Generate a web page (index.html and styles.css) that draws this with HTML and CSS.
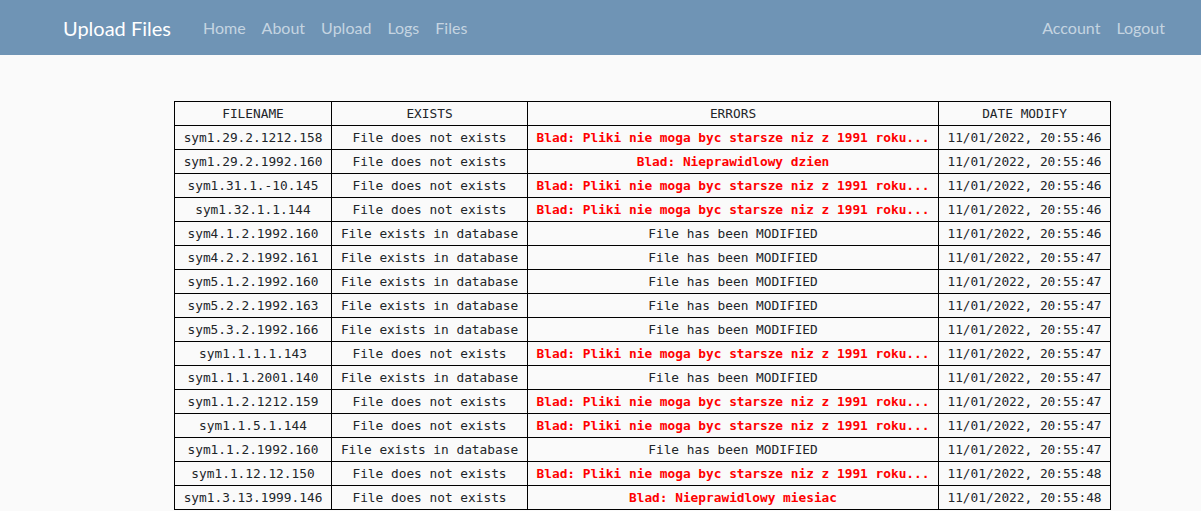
FILE: index.html
```html
<!DOCTYPE html>
<html lang="en">
<head>
<meta charset="utf-8">
<title>Upload Files</title>
<link rel="stylesheet" href="styles.css">
</head>
<body>
<nav class="navbar">
  <a class="brand" href="#">Upload Files</a>
  <ul class="links">
    <li><a href="#">Home</a></li>
    <li><a href="#">About</a></li>
    <li><a href="#">Upload</a></li>
    <li><a href="#">Logs</a></li>
    <li><a href="#">Files</a></li>
  </ul>
  <ul class="links right">
    <li><a href="#">Account</a></li>
    <li><a href="#">Logout</a></li>
  </ul>
</nav>
<main class="content">
  <table class="files">
    <colgroup>
      <col class="c-name"><col class="c-exists"><col class="c-errors"><col class="c-date">
    </colgroup>
    <thead>
      <tr><th>FILENAME</th><th>EXISTS</th><th>ERRORS</th><th>DATE MODIFY</th></tr>
    </thead>
    <tbody>
      <tr><td>sym1.29.2.1212.158</td><td>File does not exists</td><td class="err">Blad: Pliki nie moga byc starsze niz z 1991 roku...</td><td>11/01/2022, 20:55:46</td></tr>
      <tr><td>sym1.29.2.1992.160</td><td>File does not exists</td><td class="err">Blad: Nieprawidlowy dzien</td><td>11/01/2022, 20:55:46</td></tr>
      <tr><td>sym1.31.1.-10.145</td><td>File does not exists</td><td class="err">Blad: Pliki nie moga byc starsze niz z 1991 roku...</td><td>11/01/2022, 20:55:46</td></tr>
      <tr><td>sym1.32.1.1.144</td><td>File does not exists</td><td class="err">Blad: Pliki nie moga byc starsze niz z 1991 roku...</td><td>11/01/2022, 20:55:46</td></tr>
      <tr><td>sym4.1.2.1992.160</td><td>File exists in database</td><td>File has been MODIFIED</td><td>11/01/2022, 20:55:46</td></tr>
      <tr><td>sym4.2.2.1992.161</td><td>File exists in database</td><td>File has been MODIFIED</td><td>11/01/2022, 20:55:47</td></tr>
      <tr><td>sym5.1.2.1992.160</td><td>File exists in database</td><td>File has been MODIFIED</td><td>11/01/2022, 20:55:47</td></tr>
      <tr><td>sym5.2.2.1992.163</td><td>File exists in database</td><td>File has been MODIFIED</td><td>11/01/2022, 20:55:47</td></tr>
      <tr><td>sym5.3.2.1992.166</td><td>File exists in database</td><td>File has been MODIFIED</td><td>11/01/2022, 20:55:47</td></tr>
      <tr><td>sym1.1.1.1.143</td><td>File does not exists</td><td class="err">Blad: Pliki nie moga byc starsze niz z 1991 roku...</td><td>11/01/2022, 20:55:47</td></tr>
      <tr><td>sym1.1.1.2001.140</td><td>File exists in database</td><td>File has been MODIFIED</td><td>11/01/2022, 20:55:47</td></tr>
      <tr><td>sym1.1.2.1212.159</td><td>File does not exists</td><td class="err">Blad: Pliki nie moga byc starsze niz z 1991 roku...</td><td>11/01/2022, 20:55:47</td></tr>
      <tr><td>sym1.1.5.1.144</td><td>File does not exists</td><td class="err">Blad: Pliki nie moga byc starsze niz z 1991 roku...</td><td>11/01/2022, 20:55:47</td></tr>
      <tr><td>sym1.1.2.1992.160</td><td>File exists in database</td><td>File has been MODIFIED</td><td>11/01/2022, 20:55:47</td></tr>
      <tr><td>sym1.1.12.12.150</td><td>File does not exists</td><td class="err">Blad: Pliki nie moga byc starsze niz z 1991 roku...</td><td>11/01/2022, 20:55:48</td></tr>
      <tr><td>sym1.3.13.1999.146</td><td>File does not exists</td><td class="err">Blad: Nieprawidlowy miesiac</td><td>11/01/2022, 20:55:48</td></tr>
    </tbody>
  </table>
</main>
</body>
</html>
```
FILE: styles.css
```css
* { box-sizing: border-box; }
html, body { margin: 0; padding: 0; }
body {
  background: #fafafa;
  color: #212529;
  font-family: "Lato", "Noto Sans", sans-serif;
  overflow: hidden;
}
.navbar {
  display: flex;
  align-items: center;
  height: 55px;
  background: #6f94b5;
  padding: 0 28px 0 63px;
}
.brand {
  color: #ffffff;
  font-size: 20px;
  text-decoration: none;
  margin-right: 24px;
}
.links {
  display: flex;
  list-style: none;
  margin: 0;
  padding: 0;
}
.links.right { margin-left: auto; }
.links a {
  display: block;
  padding: 8px;
  color: #c5d4e1;
  font-size: 16px;
  text-decoration: none;
}
.content {
  padding: 46px 0 0 174px;
}
.files {
  border-collapse: collapse;
  table-layout: fixed;
  width: 936px;
  font-family: "DejaVu Sans Mono", "Liberation Mono", monospace;
  font-size: 12.8px;
}
.c-name { width: 157px; }
.c-exists { width: 196px; }
.c-errors { width: 411px; }
.c-date { width: 172px; }
.files th, .files td {
  border: 1px solid #000;
  text-align: center;
  white-space: nowrap;
  overflow: hidden;
  height: 24px;
  line-height: 22px;
  padding: 0 2px;
  font-weight: normal;
}
.files td.err { color: #ff0000; font-weight: bold; }
```
